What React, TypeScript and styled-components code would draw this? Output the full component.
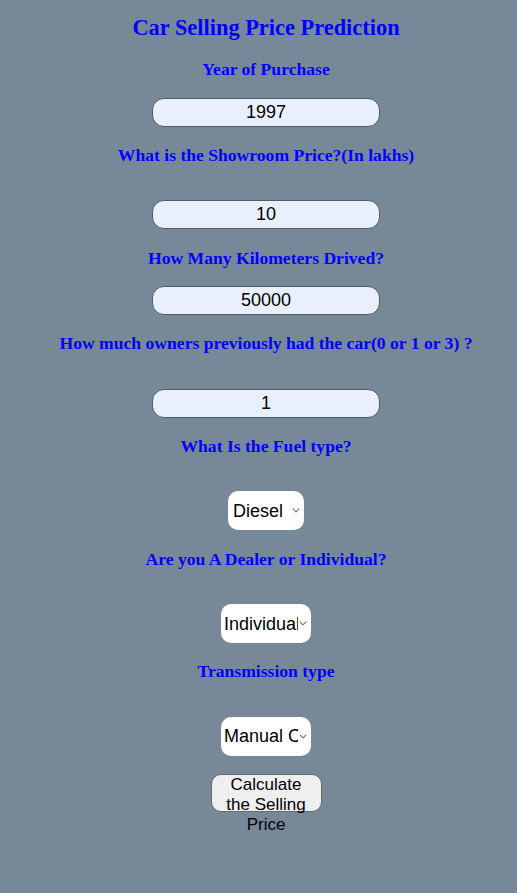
import React from "react";
import styled, { createGlobalStyle } from "styled-components";

const Global = createGlobalStyle`
  html, body {
    margin: 0;
    padding: 0;
    background: #778899;
  }
  body {
    min-height: 893px;
    overflow: hidden;
  }
`;

const Page = styled.main`
  box-sizing: border-box;
  width: 517px;
  padding: 15px 0 0 15px;
`;

const Form = styled.form`
  display: flex;
  flex-direction: column;
  align-items: center;
  gap: 18.35px;
  margin: 0;
`;

const Title = styled.h1`
  margin: 0;
  font-family: "Liberation Serif", "Times New Roman", serif;
  font-weight: bold;
  font-size: 22.4px;
  line-height: 26px;
  color: #0000ff;
  text-align: center;
`;

const Label = styled.label<{ $spaced?: boolean }>`
  display: block;
  margin: 0 0 ${(p) => (p.$spaced ? "17px" : "0")};
  font-family: "Liberation Serif", "Times New Roman", serif;
  font-weight: bold;
  font-size: 17.6px;
  line-height: 20px;
  color: #0000ff;
  text-align: center;
`;

const TextInput = styled.input`
  box-sizing: border-box;
  width: 228px;
  height: 29px;
  padding: 0 8px;
  border: 1px solid #555a60;
  border-radius: 12px;
  background: #e8f0fe;
  font-family: "Liberation Sans", Arial, sans-serif;
  font-size: 18px;
  color: #000;
  text-align: center;
  outline: none;
`;

const SelectWrap = styled.div<{ $w: number }>`
  position: relative;
  width: ${(p) => p.$w}px;
  height: 39px;
`;

const Select = styled.select<{ $pl: number }>`
  box-sizing: border-box;
  appearance: none;
  width: 100%;
  height: 39px;
  padding: 0 13px 0 ${(p) => p.$pl}px;
  border: none;
  border-radius: 10px;
  background: #fff;
  font-family: "Liberation Sans", Arial, sans-serif;
  font-size: 18px;
  color: #000;
  outline: none;
`;

const Chevron = styled.svg`
  position: absolute;
  right: 4px;
  top: 17px;
  width: 8px;
  height: 5px;
  pointer-events: none;
`;

const Button = styled.button`
  box-sizing: border-box;
  display: flex;
  flex-direction: column;
  align-items: center;
  justify-content: flex-start;
  width: 111px;
  height: 38px;
  padding: 0 6px;
  border: 1px solid #6a6a6a;
  border-radius: 10px;
  background: #efefef;
  font-family: "Liberation Sans", Arial, sans-serif;
  font-size: 17px;
  line-height: 20px;
  color: #000;
  text-align: center;
  overflow: visible;
`;

const Caret = () => (
  <Chevron viewBox="0 0 8 5">
    <path d="M0.7 0.7 L4 4 L7.3 0.7" fill="none" stroke="#7a7a7a" strokeWidth="1.2" />
  </Chevron>
);

export default function App() {
  return (
    <>
      <Global />
      <Page>
        <Form onSubmit={(e) => e.preventDefault()}>
          <Title>Car Selling Price Prediction</Title>
          <Label>Year of Purchase</Label>
          <TextInput defaultValue="1997" />
          <Label $spaced>What is the Showroom Price?(In lakhs)</Label>
          <TextInput defaultValue="10" />
          <Label>How Many Kilometers Drived?</Label>
          <TextInput defaultValue="50000" />
          <Label $spaced>How much owners previously had the car(0 or 1 or 3) ?</Label>
          <TextInput defaultValue="1" />
          <Label $spaced>What Is the Fuel type?</Label>
          <SelectWrap $w={76}>
            <Select $pl={5} defaultValue="Diesel">
              <option>Petrol</option>
              <option>Diesel</option>
              <option>CNG</option>
            </Select>
            <Caret />
          </SelectWrap>
          <Label $spaced>Are you A Dealer or Individual?</Label>
          <SelectWrap $w={90}>
            <Select $pl={3} defaultValue="Individual">
              <option>Dealer</option>
              <option>Individual</option>
            </Select>
            <Caret />
          </SelectWrap>
          <Label $spaced>Transmission type</Label>
          <SelectWrap $w={90}>
            <Select $pl={3} defaultValue="Manual Car">
              <option>Manual Car</option>
              <option>Automatic Car</option>
            </Select>
            <Caret />
          </SelectWrap>
          <Button type="submit">Calculate the Selling Price</Button>
        </Form>
      </Page>
    </>
  );
}
